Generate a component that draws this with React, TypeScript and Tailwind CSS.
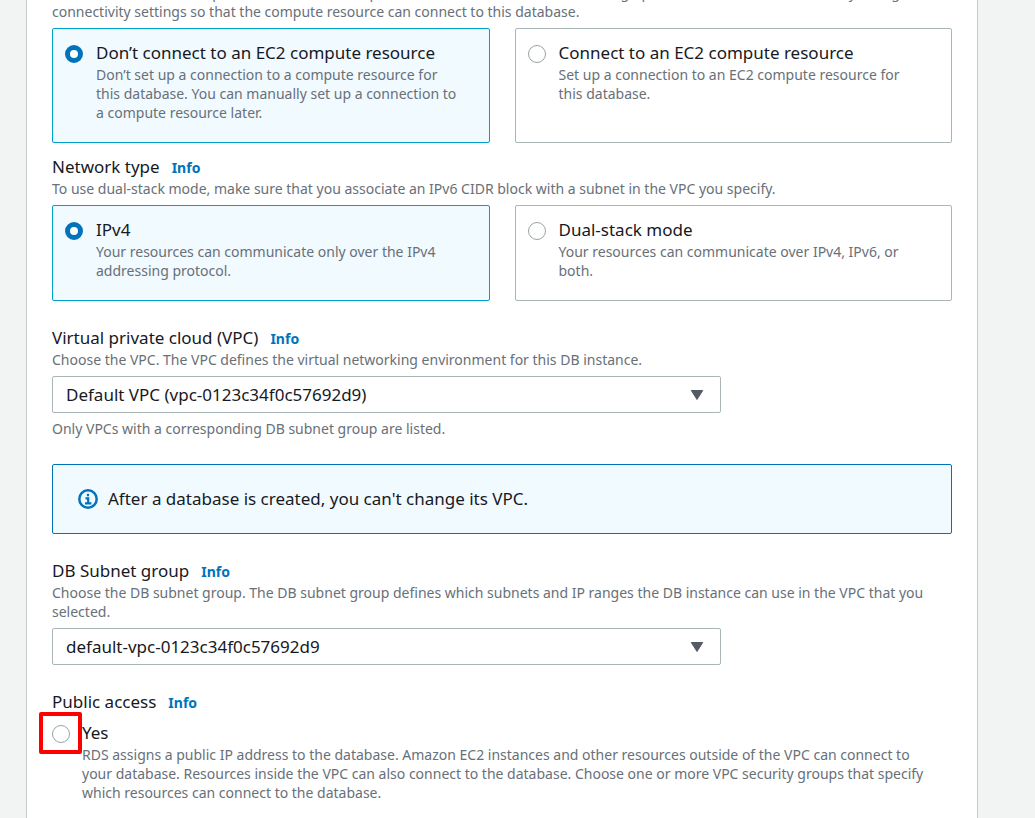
import { useState, type ReactNode } from "react";

const DESCRIPTION = "text-[14px] leading-[19px] text-[#687078]";

function InfoLink() {
  return (
    <a href="#info" className="text-[14px] font-bold text-[#0073bb] hover:underline">
      Info
    </a>
  );
}

function FieldTitle({ htmlFor, children }: { htmlFor?: string; children: ReactNode }) {
  return (
    <div className="flex items-baseline gap-3 text-[17px] leading-[22px]">
      {htmlFor ? <label htmlFor={htmlFor}>{children}</label> : <h3>{children}</h3>}
      <InfoLink />
    </div>
  );
}

type RadioProps = { id: string; name: string; checked: boolean; onChange: () => void };

function Radio({ id, name, checked, onChange }: RadioProps) {
  return (
    <input
      id={id}
      type="radio"
      name={name}
      checked={checked}
      onChange={onChange}
      className="block size-[18px] appearance-none rounded-full border border-[#95a5a6] bg-white checked:border-5 checked:border-[#0073bb]"
    />
  );
}

function Tile({ title, text, ...radio }: RadioProps & { title: string; text: string }) {
  return (
    <label
      htmlFor={radio.id}
      className="flex gap-[13px] rounded-xs border border-[#aab7b8] bg-white pt-[13px] pr-[30px] pb-5 pl-3 has-checked:border-[#00a1c9] has-checked:bg-[#f1faff]"
    >
      <span className="flex h-6 items-center">
        <Radio {...radio} />
      </span>
      <span className="flex-1">
        <span className="mb-px block text-[17px] leading-[22px]">{title}</span>
        <span className={`block ${DESCRIPTION}`}>{text}</span>
      </span>
    </label>
  );
}

function Select({ id, option }: { id: string; option: string }) {
  return (
    <div className="relative mt-[7px] w-[calc(75%-6px)]">
      <select
        id={id}
        className="block h-[37px] w-full appearance-none rounded-xs border border-[#aab7b8] bg-white pr-12 pl-[13px] text-[17px]"
      >
        <option>{option}</option>
      </select>
      <svg
        viewBox="0 0 14 12"
        className="pointer-events-none absolute top-[13px] right-[17px] h-3 w-[14px] fill-[#545b64] stroke-[#545b64]"
        strokeLinejoin="round"
      >
        <path d="M1.3 1.5h11.4L7 10.5z" />
      </svg>
    </div>
  );
}

export default function App() {
  const [compute, setCompute] = useState("none");
  const [network, setNetwork] = useState("ipv4");
  const [isPublic, setIsPublic] = useState(false);

  return (
    <div className="min-h-screen overflow-hidden bg-[#f2f3f3] pr-[57px] pl-[26px] font-['Noto_Sans',sans-serif] text-[#16191f]">
      <main className="min-h-screen border-x border-[#c5cacb] bg-white px-[25px] pb-4">
        <section>
          <p className={`-mt-[17px] ${DESCRIPTION}`}>
            Choose whether to set up a connection to a compute resource for this database. Setting up a connection will
            automatically change connectivity settings so that the compute resource can connect to this database.
          </p>
          <div className="mt-[7px] grid grid-cols-2 gap-[25px]">
            <Tile
              id="compute-none"
              name="compute"
              checked={compute === "none"}
              onChange={() => setCompute("none")}
              title="Don’t connect to an EC2 compute resource"
              text="Don’t set up a connection to a compute resource for this database. You can manually set up a connection to a compute resource later."
            />
            <Tile
              id="compute-ec2"
              name="compute"
              checked={compute === "ec2"}
              onChange={() => setCompute("ec2")}
              title="Connect to an EC2 compute resource"
              text="Set up a connection to an EC2 compute resource for this database."
            />
          </div>
        </section>

        <section className="mt-[13px]">
          <FieldTitle>Network type</FieldTitle>
          <p className={DESCRIPTION}>
            To use dual-stack mode, make sure that you associate an IPv6 CIDR block with a subnet in the VPC you specify.
          </p>
          <div className="mt-[7px] grid grid-cols-2 gap-[25px]">
            <Tile
              id="network-ipv4"
              name="network"
              checked={network === "ipv4"}
              onChange={() => setNetwork("ipv4")}
              title="IPv4"
              text="Your resources can communicate only over the IPv4 addressing protocol."
            />
            <Tile
              id="network-dual"
              name="network"
              checked={network === "dual"}
              onChange={() => setNetwork("dual")}
              title="Dual-stack mode"
              text="Your resources can communicate over IPv4, IPv6, or both."
            />
          </div>
        </section>

        <section className="mt-[26px]">
          <FieldTitle htmlFor="vpc">Virtual private cloud (VPC)</FieldTitle>
          <p className={DESCRIPTION}>
            Choose the VPC. The VPC defines the virtual networking environment for this DB instance.
          </p>
          <Select id="vpc" option="Default VPC (vpc-0123c34f0c57692d9)" />
          <p className={`mt-[6px] ${DESCRIPTION}`}>Only VPCs with a corresponding DB subnet group are listed.</p>
        </section>

        <div
          role="note"
          className="mt-[26px] flex items-center gap-[10px] rounded-xs border border-[#0073bb] bg-[#f1faff] px-[25px] py-[23px] text-[17px] leading-[22px]"
        >
          <svg viewBox="0 0 20 20" className="size-5 shrink-0" fill="none" stroke="#0073bb" strokeWidth="2.5">
            <circle cx="10" cy="10" r="8.7" />
            <path d="M10 4.7v2.6M7.5 9.3H10.2v5M7 14.3h6.4" strokeWidth="2.2" />
          </svg>
          <p>After a database is created, you can't change its VPC.</p>
        </div>

        <section className="mt-[26px]">
          <FieldTitle htmlFor="subnet">DB Subnet group</FieldTitle>
          <p className={DESCRIPTION}>
            Choose the DB subnet group. The DB subnet group defines which subnets and IP ranges the DB instance can use
            in the VPC that you selected.
          </p>
          <Select id="subnet" option="default-vpc-0123c34f0c57692d9" />
        </section>

        <section className="mt-[26px]">
          <FieldTitle>Public access</FieldTitle>
          <div className="mt-2 flex gap-3 pr-[26px]">
            <div className="flex h-6 items-center">
              <div className="relative">
                <Radio id="public-yes" name="public" checked={isPublic} onChange={() => setIsPublic(true)} />
                <span className="pointer-events-none absolute -top-[13px] -left-[13px] h-[42px] w-[43px] rounded-xs border-4 border-[#fe0000]" />
              </div>
            </div>
            <div className="flex-1">
              <label htmlFor="public-yes" className="mb-px block text-[17px] leading-[22px]">
                Yes
              </label>
              <p className={DESCRIPTION}>
                RDS assigns a public IP address to the database. Amazon EC2 instances and other resources outside of the
                VPC can connect to your database. Resources inside the VPC can also connect to the database. Choose one
                or more VPC security groups that specify which resources can connect to the database.
              </p>
            </div>
          </div>
        </section>
      </main>
    </div>
  );
}
